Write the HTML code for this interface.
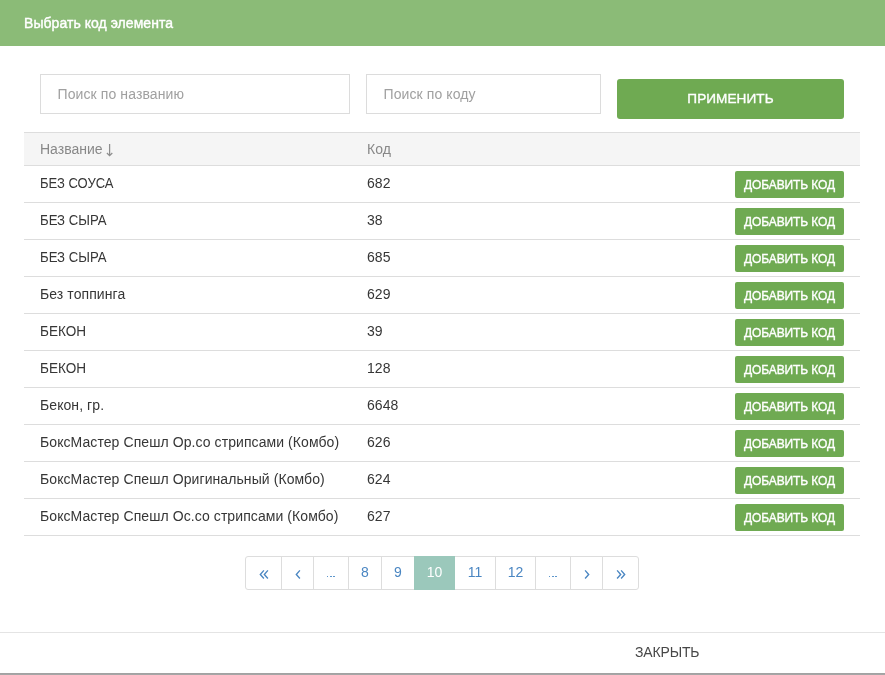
<!DOCTYPE html>
<html><head><meta charset="utf-8">
<style>
*{box-sizing:border-box;margin:0;padding:0}
html,body{width:885px;height:675px;overflow:hidden;background:#fff;font-family:"Liberation Sans",sans-serif;}
body{will-change:transform}
.abs{position:absolute}
#hdr{left:0;top:0;width:885px;height:46px;background:#8bbb77}
#title{left:24px;top:15px;color:#fff;font-size:14px;font-weight:normal;line-height:16px;white-space:nowrap;letter-spacing:0.05px;-webkit-text-stroke:0.4px #fff}
.inp{border:1px solid #dcdcdc;height:40px;top:74px;background:#fff}
.ph{color:#a0a0a0;font-size:14px;line-height:16px;white-space:nowrap;letter-spacing:0.1px}
.btn{background:#6faa52;border-radius:3px;color:#fff;font-weight:normal;-webkit-text-stroke:0.4px #fff;white-space:nowrap;text-align:center}
#thead{left:24px;top:132px;width:836px;height:34px;background:#f5f5f5;border-top:1px solid #dddddd;border-bottom:1px solid #dddddd}
.th{color:#888;font-size:14px;line-height:16px;white-space:nowrap}
.row{left:24px;width:836px;height:37px;border-bottom:1px solid #dddddd}
.td{color:#363636;font-size:14px;line-height:16px;white-space:nowrap;letter-spacing:0.08px}
.caps{letter-spacing:0;transform-origin:0 0}
.add{left:735px;width:109px;height:27px;font-size:12px;line-height:28px;border-radius:2px;padding-right:0;letter-spacing:-0.12px;-webkit-text-stroke:0.35px #fff}
.pg{top:556px;height:34px;border:1px solid #dddddd;color:#4a86c2;font-size:14px;line-height:31px;text-align:center;background:#fff}
.pg.first{border-radius:3px 0 0 3px}
.pg.last{border-radius:0 3px 3px 0}
.pg.act{background:#9bc8bb;border-color:#9bc8bb;color:#fff;z-index:2}
.dots{position:absolute;left:12.7px;top:18.8px;width:9px;height:2px}
.dots i{position:absolute;top:0;width:1.7px;height:1.4px;background:#5f97cc}
.dots i:nth-child(1){left:0} .dots i:nth-child(2){left:3.35px} .dots i:nth-child(3){left:6.7px}
#fline{left:0;top:632px;width:885px;height:1px;background:#e4e4e4}
#close{left:635px;top:644px;color:#474747;font-size:14px;line-height:16px;letter-spacing:-0.15px}
#bline{left:0;top:673px;width:885px;height:2px;background:linear-gradient(#a0a0a0,#a8a8a8)}
</style></head><body>
<div id="hdr" class="abs"></div>
<div id="title" class="abs">Выбрать код элемента</div>

<div class="abs inp" style="left:40px;width:310px"></div>
<div class="abs ph" style="left:57.5px;top:86px">Поиск по названию</div>
<div class="abs inp" style="left:366px;width:235px"></div>
<div class="abs ph" style="left:383.5px;top:86px">Поиск по коду</div>
<div class="abs btn" style="left:617px;top:79px;width:227px;height:40px;line-height:39px;font-size:13.6px;letter-spacing:0.05px;-webkit-text-stroke:0.35px #fff">ПРИМЕНИТЬ</div>

<div id="thead" class="abs"></div>
<div class="abs th" style="left:40px;top:141px">Название</div>
<svg class="abs" style="left:105px;top:143px" width="9" height="14" viewBox="0 0 9 14"><path d="M4.6 1V12.3M1.9 10L4.6 12.6L7.3 10" fill="none" stroke="#8e8e8e" stroke-width="1.25"/></svg>
<div class="abs th" style="left:367px;top:141px">Код</div>

<div class="abs row" style="top:166px"></div>
<div class="abs td caps" style="left:40px;top:175px;transform:scaleX(0.93)">БЕЗ СОУСА</div>
<div class="abs td" style="left:367px;top:175px">682</div>
<div class="abs btn add" style="top:171px">ДОБАВИТЬ КОД</div>
<div class="abs row" style="top:203px"></div>
<div class="abs td caps" style="left:40px;top:212px;transform:scaleX(0.94)">БЕЗ СЫРА</div>
<div class="abs td" style="left:367px;top:212px">38</div>
<div class="abs btn add" style="top:208px">ДОБАВИТЬ КОД</div>
<div class="abs row" style="top:240px"></div>
<div class="abs td caps" style="left:40px;top:249px;transform:scaleX(0.94)">БЕЗ СЫРА</div>
<div class="abs td" style="left:367px;top:249px">685</div>
<div class="abs btn add" style="top:245px">ДОБАВИТЬ КОД</div>
<div class="abs row" style="top:277px"></div>
<div class="abs td" style="left:40px;top:286px">Без топпинга</div>
<div class="abs td" style="left:367px;top:286px">629</div>
<div class="abs btn add" style="top:282px">ДОБАВИТЬ КОД</div>
<div class="abs row" style="top:314px"></div>
<div class="abs td caps" style="left:40px;top:323px;transform:scaleX(0.97)">БЕКОН</div>
<div class="abs td" style="left:367px;top:323px">39</div>
<div class="abs btn add" style="top:319px">ДОБАВИТЬ КОД</div>
<div class="abs row" style="top:351px"></div>
<div class="abs td caps" style="left:40px;top:360px;transform:scaleX(0.97)">БЕКОН</div>
<div class="abs td" style="left:367px;top:360px">128</div>
<div class="abs btn add" style="top:356px">ДОБАВИТЬ КОД</div>
<div class="abs row" style="top:388px"></div>
<div class="abs td" style="left:40px;top:397px">Бекон, гр.</div>
<div class="abs td" style="left:367px;top:397px">6648</div>
<div class="abs btn add" style="top:393px">ДОБАВИТЬ КОД</div>
<div class="abs row" style="top:425px"></div>
<div class="abs td" style="left:40px;top:434px">БоксМастер Спешл Ор.со стрипсами (Комбо)</div>
<div class="abs td" style="left:367px;top:434px">626</div>
<div class="abs btn add" style="top:430px">ДОБАВИТЬ КОД</div>
<div class="abs row" style="top:462px"></div>
<div class="abs td" style="left:40px;top:471px">БоксМастер Спешл Оригинальный (Комбо)</div>
<div class="abs td" style="left:367px;top:471px">624</div>
<div class="abs btn add" style="top:467px">ДОБАВИТЬ КОД</div>
<div class="abs row" style="top:499px"></div>
<div class="abs td" style="left:40px;top:508px">БоксМастер Спешл Ос.со стрипсами (Комбо)</div>
<div class="abs td" style="left:367px;top:508px">627</div>
<div class="abs btn add" style="top:504px">ДОБАВИТЬ КОД</div>

<div class="abs pg first" style="left:245px;width:37px"><svg width="10" height="11" viewBox="0 0 10 11" style="position:absolute;left:13px;top:12px"><path d="M4.9 1.4 L1.3 5.45 L4.9 9.5 M8.9 1.4 L5.3 5.45 L8.9 9.5" fill="none" stroke="#4a86c2" stroke-width="1.35"/></svg></div>
<div class="abs pg " style="left:281px;width:33px"><svg width="6" height="11" viewBox="0 0 6 11" style="position:absolute;left:13px;top:12px"><path d="M4.9 1.4 L1.3 5.45 L4.9 9.5" fill="none" stroke="#4a86c2" stroke-width="1.35"/></svg></div>
<div class="abs pg " style="left:313px;width:36px"><span class="dots"><i></i><i></i><i></i></span></div>
<div class="abs pg " style="left:348px;width:34px">8</div>
<div class="abs pg " style="left:381px;width:34px">9</div>
<div class="abs pg act" style="left:414px;width:41px">10</div>
<div class="abs pg " style="left:454px;width:42px">11</div>
<div class="abs pg " style="left:495px;width:41px">12</div>
<div class="abs pg " style="left:535px;width:36px"><span class="dots"><i></i><i></i><i></i></span></div>
<div class="abs pg " style="left:570px;width:33px"><svg width="6" height="11" viewBox="0 0 6 11" style="position:absolute;left:13px;top:12px"><path d="M1.1 1.4 L4.7 5.45 L1.1 9.5" fill="none" stroke="#4a86c2" stroke-width="1.35"/></svg></div>
<div class="abs pg last" style="left:602px;width:37px"><svg width="10" height="11" viewBox="0 0 10 11" style="position:absolute;left:13px;top:12px"><path d="M1.1 1.4 L4.7 5.45 L1.1 9.5 M5.1 1.4 L8.7 5.45 L5.1 9.5" fill="none" stroke="#4a86c2" stroke-width="1.35"/></svg></div>

<div id="fline" class="abs"></div>
<div id="close" class="abs">ЗАКРЫТЬ</div>
<div id="bline" class="abs"></div>
</body></html>
